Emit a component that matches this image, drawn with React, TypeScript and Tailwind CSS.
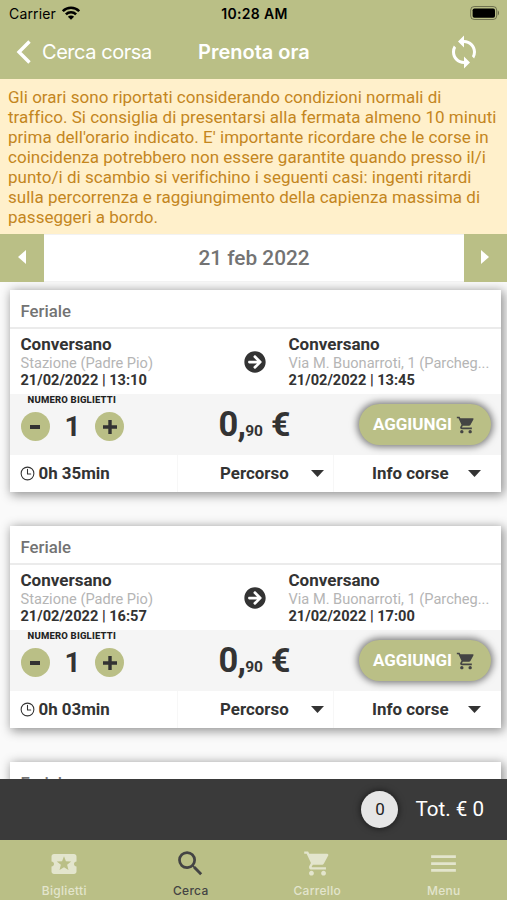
import React from "react";
import { MdSync, MdLocalActivity, MdSearch, MdShoppingCart, MdMenu } from "react-icons/md";
import { FaArrowCircleRight } from "react-icons/fa";
import { IoTimeOutline } from "react-icons/io5";
import clsx from "clsx";

type Trip = {
  from: string;
  fromStop: string;
  departure: string;
  to: string;
  toStop: string;
  arrival: string;
  duration: string;
};

const rides: { id: number; type: string; trip?: Trip }[] = [
  {
    id: 1,
    type: "Feriale",
    trip: { from: "Conversano", fromStop: "Stazione (Padre Pio)", departure: "21/02/2022 | 13:10", to: "Conversano", toStop: "Via M. Buonarroti, 1 (Parcheg...", arrival: "21/02/2022 | 13:45", duration: "0h 35min" },
  },
  {
    id: 2,
    type: "Feriale",
    trip: { from: "Conversano", fromStop: "Stazione (Padre Pio)", departure: "21/02/2022 | 16:57", to: "Conversano", toStop: "Via M. Buonarroti, 1 (Parcheg...", arrival: "21/02/2022 | 17:00", duration: "0h 03min" },
  },
  { id: 3, type: "Feriale" },
];

const tabs = [
  { label: "Biglietti", icon: MdLocalActivity, size: "size-[30px]", active: false },
  { label: "Cerca", icon: MdSearch, size: "size-[33px]", active: true },
  { label: "Carrello", icon: MdShoppingCart, size: "size-[29px]", active: false },
  { label: "Menu", icon: MdMenu, size: "size-[33px]", active: false },
];

function StatusBar() {
  return (
    <div className="grid h-[27px] grid-cols-3 items-center pl-[9px] pr-[7px] font-['Inter',sans-serif] text-[14px] text-black">
      <div className="flex items-center gap-[6px]">
        <span className="tracking-[0.15px]">Carrier</span>
        <svg className="mb-[2px]" width="18" height="14" viewBox="0 0 18 14" fill="none" stroke="currentColor" strokeWidth="2.6">
          <path d="M0.800 5.2a11.6 11.6 0 0 1 16.400 0" />
          <path d="M3.900 8.4a7.3 7.3 0 0 1 10.200 0" />
          <path d="M9 13.8 5.900 10.700a4.400 4.400 0 0 1 6.200 0z" fill="currentColor" stroke="none" />
        </svg>
      </div>
      <span className="text-center font-semibold tracking-[0.35px]">10:28 AM</span>
      <svg className="mb-px justify-self-end" width="30" height="14" viewBox="0 0 30 14">
        <rect x="0.7" y="0.5" width="26" height="13" rx="3.5" fill="none" stroke="#000" strokeOpacity="0.4" />
        <rect x="2.6" y="2.4" width="22.4" height="9.4" rx="1.8" fill="#000" />
        <path d="M27.8 4.6c1.6.5 1.6 4.300 0 4.800z" fill="#000" fillOpacity="0.45" />
      </svg>
    </div>
  );
}

function Caret() {
  return (
    <svg width="13" height="7" viewBox="0 0 13 7" fill="#333">
      <path d="M0 0h13L6.500 7z" />
    </svg>
  );
}

function Stop({ city, stop, time }: { city: string; stop: string; time: string }) {
  return (
    <div className="whitespace-nowrap">
      <p className="text-[17px] font-bold leading-[20px] text-[#333]">{city}</p>
      <p className="text-[14.6px] leading-[18px] text-[#b5b5b5]">{stop}</p>
      <p className="text-[14.6px] font-bold leading-[17px] text-[#333]">{time}</p>
    </div>
  );
}

function TripDetails({ trip }: { trip: Trip }) {
  return (
    <>
      <div className="grid h-[65px] grid-cols-[223px_45px_200px] pl-[11px] pt-[5px]">
        <Stop city={trip.from} stop={trip.fromStop} time={trip.departure} />
        <FaArrowCircleRight className="mt-[17px] size-[22px] text-[#333]" />
        <Stop city={trip.to} stop={trip.toStop} time={trip.arrival} />
      </div>
      <div className="grid h-[61px] grid-cols-[198px_140px_132px] bg-[#f5f5f5] pl-[11px]">
        <div className="w-[104px]">
          <p className="whitespace-nowrap pl-[7px] text-[9.5px] font-extrabold leading-[11px] tracking-[0.2px] text-[#222]">NUMERO BIGLIETTI</p>
          <div className="mt-[7px] flex items-center justify-between text-[#333]">
            <button className="flex size-[29px] items-center justify-center rounded-full bg-[#babf86]">
              <span className="h-[4px] w-[10px] bg-[#333]" />
            </button>
            <span className="text-[28px] font-bold leading-[28px]">1</span>
            <button className="flex size-[29px] items-center justify-center rounded-full bg-[#babf86]">
              <svg width="14" height="14" viewBox="0 0 14 14" stroke="#333" strokeWidth="3.400">
                <path d="M7 0v14M0 7h14" />
              </svg>
            </button>
          </div>
        </div>
        <div className="flex items-baseline pt-[10px] font-bold text-[#333]">
          <span className="text-[34.500px] leading-[40px] tracking-[-0.8px]">0,</span>
          <span className="text-[15.500px]">90</span>
          <span className="ml-[8px] text-[34px] leading-[40px]">€</span>
        </div>
        <button className="mt-[10px] flex h-[41px] w-[132px] items-center justify-center gap-[4px] rounded-full bg-[#babf86] shadow-[0_0_7px_2px_rgba(0,0,0,0.5)]">
          <span className="text-[17px] font-bold text-white">AGGIUNGI</span>
          <MdShoppingCart className="size-[20px] text-[#444]" />
        </button>
      </div>
      <div className="grid h-[37px] grid-cols-[168px_156px_1fr] text-[16.900px] font-bold text-[#333]">
        <div className="flex items-center gap-[3px] border-r border-[#f7f7f7] pl-[9px]">
          <IoTimeOutline className="size-[17px]" />
          <span>{trip.duration}</span>
        </div>
        <div className="flex items-center justify-between border-r border-[#f7f7f7] pl-[42.500px] pr-[9px]">
          <span>Percorso</span>
          <Caret />
        </div>
        <div className="flex items-center justify-between pl-[38.500px] pr-[20px]">
          <span>Info corse</span>
          <Caret />
        </div>
      </div>
    </>
  );
}

export default function App() {
  return (
    <div className="flex h-[900px] w-[507px] flex-col overflow-hidden bg-[#fafafa] font-['Roboto',sans-serif]">
      <header className="h-[79px] shrink-0 bg-[#babf86]">
        <StatusBar />
        <div className="grid h-[50px] grid-cols-[182px_1fr_auto] items-center pl-[16px] pr-[25px] text-white">
          <div className="flex items-center gap-[10px]">
            <svg width="16" height="24" viewBox="0 0 16 24" fill="none" stroke="currentColor" strokeWidth="3.400">
              <path d="M13.500 1.500 3 12l10.500 10.500" />
            </svg>
            <span className="font-['Inter',sans-serif] text-[20px] tracking-[-0.45px]">Cerca corsa</span>
          </div>
          <h1 className="font-['Inter',sans-serif] text-[20px] font-semibold">Prenota ora</h1>
          <MdSync className="size-[36px]" />
        </div>
      </header>

      <p className="h-[155px] shrink-0 whitespace-pre-line bg-[#fff0cb] pl-[8px] pt-[8px] text-[17px] leading-[20px] tracking-[0.02px] text-[#c4861e]">
        {`Gli orari sono riportati considerando condizioni normali di
        traffico. Si consiglia di presentarsi alla fermata almeno 10 minuti
        prima dell'orario indicato. E' importante ricordare che le corse in
        coincidenza potrebbero non essere garantite quando presso il/i
        punto/i di scambio si verifichino i seguenti casi: ingenti ritardi
        sulla percorrenza e raggiungimento della capienza massima di
        passeggeri a bordo.`}
      </p>

      <div className="flex h-[48px] shrink-0 bg-[#babf86]">
        <button className="flex w-[44px] items-center justify-center pb-[3px]">
          <svg width="8" height="14" viewBox="0 0 8 14" fill="#fff">
            <path d="M8 0v14L0 7z" />
          </svg>
        </button>
        <div className="flex flex-1 items-center justify-center border-y border-[#f2f2f2] bg-white pt-[2px] text-[20.800px] font-medium text-[#737373]">
          21 feb 2022
        </div>
        <button className="flex w-[43px] items-center justify-center pb-[3px] pr-[2px]">
          <svg width="8" height="14" viewBox="0 0 8 14" fill="#fff">
            <path d="M0 0v14l8-7z" />
          </svg>
        </button>
      </div>

      <main className="flex min-h-0 flex-1 flex-col gap-[34px] overflow-hidden pl-[9.500px] pr-[6px] pt-[8px]">
        {rides.map((ride) => (
          <div key={ride.id} className="shrink-0 bg-white shadow-[2px_2px_10px_1px_rgba(0,0,0,0.42)]">
            <div className="flex h-[39px] items-center border-b-2 border-[#ebebeb] pl-[11px] pt-[6px]">
              <span className="text-[16.800px] font-medium text-[#737373]">{ride.type}</span>
            </div>
            {ride.trip && <TripDetails trip={ride.trip} />}
          </div>
        ))}
      </main>

      <div className="flex h-[61px] shrink-0 items-center justify-end gap-[17px] bg-[#3a3a3a] pr-[23px]">
        <span className="flex size-[37px] items-center justify-center rounded-full bg-[#e6e6e6] text-[17px] text-[#222] shadow-[0_0_6px_1px_rgba(0,0,0,0.5)]">0</span>
        <span className="text-[20.600px] text-white">Tot. € 0</span>
      </div>

      <nav className="grid h-[60px] shrink-0 grid-cols-4 bg-[#babf86] pl-px">
        {tabs.map((tab) => (
          <div key={tab.label} className={clsx("flex flex-col items-center pt-[7px]", tab.active ? "text-[#444]" : "text-[#e3e5cd]")}>
            <div className="flex h-[33px] items-center">
              <tab.icon className={tab.size} />
            </div>
            <span className="mt-[3px] font-['Inter',sans-serif] text-[12px] font-medium leading-[15px] tracking-[0.3px]">{tab.label}</span>
          </div>
        ))}
      </nav>
    </div>
  );
}
